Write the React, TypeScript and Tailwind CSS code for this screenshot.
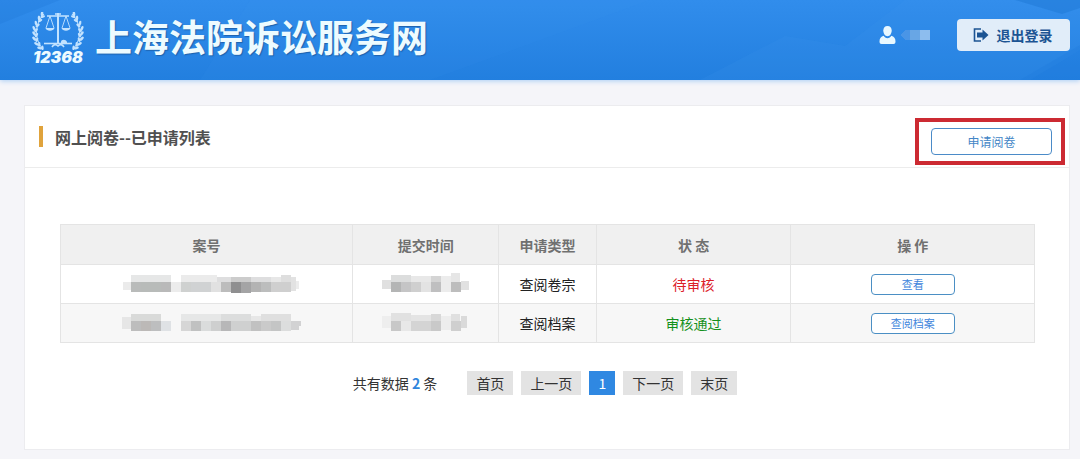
import React from "react";

type Block = [x: number, y: number, w: number, h: number, fill: string];

const caseOne: Block[] = [
  [10, 9, 8, 8, "#ebebeb"], [18, 2, 40, 7, "#e6e7e7"], [18, 9, 10, 10, "#b9bbba"], [28, 9, 20, 10, "#b8bbb9"],
  [48, 9, 10, 10, "#b9b9b9"], [58, 9, 10, 10, "#ececec"], [68, 2, 36, 7, "#ebebeb"], [68, 9, 10, 10, "#cfd1d0"],
  [78, 9, 20, 10, "#d0d2d3"], [98, 9, 10, 10, "#e1e1e1"], [104, 4, 54, 5, "#dededf"], [108, 9, 10, 10, "#bcbcbc"],
  [118, 4, 20, 5, "#cccccc"], [118, 9, 10, 11, "#8f8f90"], [128, 9, 10, 11, "#a4a4a5"], [138, 9, 10, 10, "#b3b3b3"],
  [148, 9, 10, 10, "#bcbdbd"], [158, 9, 20, 10, "#cfcfcf"], [158, 4, 10, 5, "#e7e7e7"], [168, 2, 10, 7, "#dedede"],
  [178, 4, 5, 14, "#e2e2e2"], [183, 8, 3, 8, "#ececec"],
];

const caseTwo: Block[] = [
  [9, 5, 9, 12, "#e6e6e6"], [18, 2, 30, 7, "#d9dad9"], [18, 9, 10, 10, "#bdbdbd"], [28, 9, 10, 10, "#bcb9b7"],
  [38, 9, 10, 10, "#bdbebf"], [48, 9, 10, 10, "#dfe2e5"], [68, 2, 40, 7, "#e6e7e7"], [68, 9, 10, 10, "#d6d6d6"],
  [78, 9, 10, 10, "#c0c1c1"], [88, 9, 10, 10, "#dadcdc"], [98, 9, 10, 10, "#cecfcf"], [108, 2, 30, 7, "#dcdddd"],
  [108, 9, 10, 10, "#b7b7b8"], [118, 9, 20, 10, "#cfd0d0"], [138, 9, 10, 10, "#c1c1c1"], [148, 2, 30, 7, "#dfdfdf"],
  [138, 4, 10, 5, "#e7e7e7"], [148, 9, 10, 10, "#cacaca"], [158, 9, 10, 10, "#c4c5c5"], [168, 9, 10, 10, "#dcdddd"],
  [178, 9, 8, 9, "#d2d2d3"], [186, 9, 3, 5, "#d2d2d3"],
];

const timeOne: Block[] = [
  [1, 7, 9, 9, "#e0e0e0"], [10, 2, 20, 7, "#dcdddd"], [10, 9, 10, 10, "#b4b5b5"], [20, 9, 10, 10, "#c5c5c6"],
  [30, 3, 20, 6, "#e8e8e8"], [30, 9, 10, 10, "#cfcfcf"], [40, 9, 10, 10, "#e3e3e3"], [50, 3, 10, 6, "#d4d4d4"],
  [50, 9, 10, 10, "#bfbfc0"], [60, 3, 10, 16, "#ececec"], [70, 0, 9, 9, "#e6e6e6"], [70, 9, 10, 10, "#bdbdbd"],
  [80, 8, 8, 9, "#e1e1e1"],
];

const timeTwo: Block[] = [
  [1, 4, 9, 12, "#eeeeee"], [10, 1, 20, 8, "#e1e1e1"], [10, 9, 10, 10, "#c8c8c8"], [20, 9, 10, 10, "#e8e8e8"],
  [30, 3, 20, 6, "#e4e4e4"], [30, 9, 20, 10, "#d4d4d4"], [50, 2, 10, 7, "#d8d8d8"], [50, 9, 10, 10, "#c9c9c9"],
  [60, 4, 10, 14, "#ededed"], [70, 2, 9, 7, "#e0e0e0"], [70, 9, 10, 10, "#cfcfcf"], [80, 4, 6, 12, "#dadada"],
];

function Redacted({ blocks, width, label }: { blocks: Block[]; width: number; label: string }) {
  return (
    <svg width={width} height="22" viewBox={`0 0 ${width} 22`} className="mx-auto block" role="img" aria-label={label} shapeRendering="crispEdges">
      {blocks.map(([x, y, w, h, fill], i) => (
        <rect key={i} x={x} y={y} width={w} height={h} fill={fill} />
      ))}
    </svg>
  );
}

const leaves = [
  [11, 2, -38], [8, 6, -30], [5, 11, -18], [3, 16, -8], [3, 21, 4], [3, 26, 14], [5, 31, 28], [8, 35, 40],
];

function Emblem() {
  const branch = (
    <g>
      <path d="M12 2C3 12 2 26 10 36" strokeWidth="1" fill="none" />
      {leaves.map(([x, y, r], i) => (
        <g key={i} transform={`translate(${x} ${y}) rotate(${-r})`}>
          <ellipse cx="-1" cy="0" rx="1.3" ry="2.6" transform="rotate(-32)" stroke="none" />
          <ellipse cx="2.4" cy="1" rx="1.2" ry="2.4" transform="rotate(35)" stroke="none" />
        </g>
      ))}
    </g>
  );
  return (
    <svg width="52" height="38" viewBox="0 0 52 38" fill="#c3e3ff" stroke="#c3e3ff" aria-hidden="true">
      {branch}
      <g transform="translate(52 0) scale(-1 1)">{branch}</g>
      <path d="M26 1v30" strokeWidth="2" />
      <path d="M15 4h22M23 2h6" strokeWidth="1.4" />
      <path d="M18 4l-4 12M18 4l4 12M34 4l-4 12M34 4l4 12" strokeWidth="0.9" fill="none" />
      <path d="M13.500 16h9c-1 3.500-8 3.500-9 0zM29.500 16h9c-1 3.500-8 3.500-9 0z" stroke="none" />
      <path d="M12 31.500h28" strokeWidth="1.6" />
      <path d="M29 30c0-3 5-3 6 0v1h-6z" stroke="none" />
      <path d="M20 35c2-3 4-3 6-1 2-2 4-2 6 1" fill="none" strokeWidth="1.6" />
    </svg>
  );
}

function HeaderPattern() {
  return (
    <svg className="absolute inset-0 h-full w-full" viewBox="0 0 1080 80" preserveAspectRatio="none" aria-hidden="true">
      <path d="M0 0h60L0 24z" fill="#1f78d8" opacity="0.3" />
      <path d="M250 0h400L430 80H200z" fill="#3f9af2" opacity="0.08" />
      <path d="M905 0L845 46l-60-10-85 44h330l50-30V0z" fill="#3f97ee" opacity="0.16" />
      <path d="M1015 0h65v8l-18 6z" fill="#1a72d0" opacity="0.4" />
      <path d="M1080 45v35h-60z" fill="#1a78dc" opacity="0.25" />
    </svg>
  );
}

const rows = [
  { caseBlocks: caseOne, timeBlocks: timeOne, type: "查阅卷宗", status: "待审核", tone: "text-[#dc2028]", action: "查看", bg: "bg-white" },
  { caseBlocks: caseTwo, timeBlocks: timeTwo, type: "查阅档案", status: "审核通过", tone: "text-[#15911c]", action: "查阅档案", bg: "bg-[#f7f7f7]" },
];

const pages = ["首页", "上一页", "1", "下一页", "末页"];
const headCell = "border border-[#e4e4e4] p-0 font-bold";
const cell = "border border-[#e4e4e4] p-0";

export default function App() {
  return (
    <div className="min-h-screen bg-[#f5f5f9] pb-2 font-['Noto_Sans_CJK_SC',sans-serif] text-sm text-[#333]">
      <header className="relative h-20 bg-linear-to-b from-[#318dec] to-[#227fdf] shadow-[0_1px_5px_#a9cdf5]">
        <HeaderPattern />
        <div className="relative flex h-full items-center justify-between pr-[10px] pl-8">
          <div className="flex items-center gap-[11px]">
            <div className="flex w-[52px] flex-col items-center pb-1">
              <Emblem />
              <span className="font-[Inter,sans-serif] text-base leading-[14px] font-black text-[#edfaff] italic">12368</span>
            </div>
            <h1 className="pb-2 text-[37px] leading-10 font-bold text-[#edfbff] [text-shadow:1px_1px_1px_#1d62ad]">上海法院诉讼服务网</h1>
          </div>
          <div className="flex items-center gap-[26px] pb-[10px]">
            <div className="flex items-center gap-[3px]">
              <svg width="17" height="20" viewBox="0 0 17 20" fill="#e9f8ff" aria-hidden="true">
                <path d="M8.500 1C5.800 1 4.300 2.900 4.300 5.500c0 2.900 1.700 5.700 4.200 5.700s4.200-2.800 4.200-5.700C12.700 2.900 11.200 1 8.500 1z" />
                <path d="M4.700 10.800C2 11.700.5 13 .5 16.500c0 1.700.7 2.500 2 2.500h12c1.300 0 2-.8 2-2.500 0-3.500-1.500-4.800-4.200-5.700-.8 1.500-2.100 2.500-3.800 2.500s-3-1-3.800-2.500z" />
              </svg>
              <svg width="32" height="14" viewBox="0 0 32 14" role="img" aria-label="用户" shapeRendering="crispEdges">
                <path d="M1 7l5-5h5v10H6z" fill="#4a95e6" />
                <rect x="11" y="2" width="10" height="10" fill="#68a6e5" />
                <rect x="21" y="2" width="10" height="10" fill="#8dbdee" />
              </svg>
            </div>
            <button type="button" className="flex h-8 w-[113px] items-center justify-center gap-2 rounded bg-[#e1edf9] pr-[2px] font-bold text-[#1c5493]">
              <svg width="16" height="14" viewBox="0 0 16 14" aria-hidden="true">
                <path d="M8 1H1.500v12H8" fill="none" stroke="#1c5493" strokeWidth="1.600" />
                <path d="M4 4.500h5.500V1.500L15.500 7l-6 5.500v-3H4z" fill="#1c5493" />
              </svg>
              退出登录
            </button>
          </div>
        </div>
      </header>

      <main className="mt-[25px] mr-[10px] ml-6 border border-[#ececef] bg-white pb-[54px]">
        <div className="flex h-[62px] items-center justify-between border-b border-[#ececec] pr-1 pl-[14px]">
          <h2 className="flex items-center gap-3 text-base leading-6 font-bold text-[#505050]">
            <span className="h-[21px] w-1 bg-[#e0a33c]" />
            网上阅卷--已申请列表
          </h2>
          <div className="mt-[10px] border-4 border-[#cc2a32] py-[6px] pr-[9px] pl-3">
            <button type="button" className="block h-[27px] w-[121px] rounded border border-[#4b8bc8] text-xs text-[#4386c6]">申请阅卷</button>
          </div>
        </div>

        <div className="mt-14 mr-[34px] ml-[35px]">
          <table className="w-full table-fixed border-collapse text-center">
            <colgroup>
              <col className="w-[30%]" />
              <col className="w-[15%]" />
              <col className="w-[10%]" />
              <col className="w-[20%]" />
              <col className="w-[25%]" />
            </colgroup>
            <thead>
              <tr className="h-10 bg-[#f0f0f0] text-[#707070]">
                <th className={headCell}>案号</th>
                <th className={headCell}>提交时间</th>
                <th className={headCell}>申请类型</th>
                <th className={headCell}>状 态</th>
                <th className={headCell}>操 作</th>
              </tr>
            </thead>
            <tbody>
              {rows.map((row) => (
                <tr key={row.type} className={`h-[39px] ${row.bg}`}>
                  <td className={cell}><Redacted blocks={row.caseBlocks} width={188} label="案号" /></td>
                  <td className={cell}><Redacted blocks={row.timeBlocks} width={90} label="提交时间" /></td>
                  <td className={`${cell} text-[#222]`}>{row.type}</td>
                  <td className={`${cell} ${row.tone}`}>{row.status}</td>
                  <td className={cell}>
                    <button type="button" className="mx-auto block h-[21px] w-[84px] rounded border border-[#4b8fc4] bg-white text-[11px] leading-[18px] text-[#3f85dc]">
                      {row.action}
                    </button>
                  </td>
                </tr>
              ))}
            </tbody>
          </table>
        </div>

        <div className="mt-7 flex items-center justify-center gap-[30px] pr-1">
          <p className="leading-6">
            共有数据 <b className="text-[#2f86dd]">2</b> 条
          </p>
          <nav className="flex gap-2" aria-label="分页">
            {pages.map((page) => (
              <button
                key={page}
                type="button"
                className={`h-6 px-[9px] leading-6 ${page === "1" ? "bg-[#2f88e2] text-white" : "bg-[#e3e3e3] text-[#333]"}`}
              >
                {page}
              </button>
            ))}
          </nav>
        </div>
      </main>
    </div>
  );
}
